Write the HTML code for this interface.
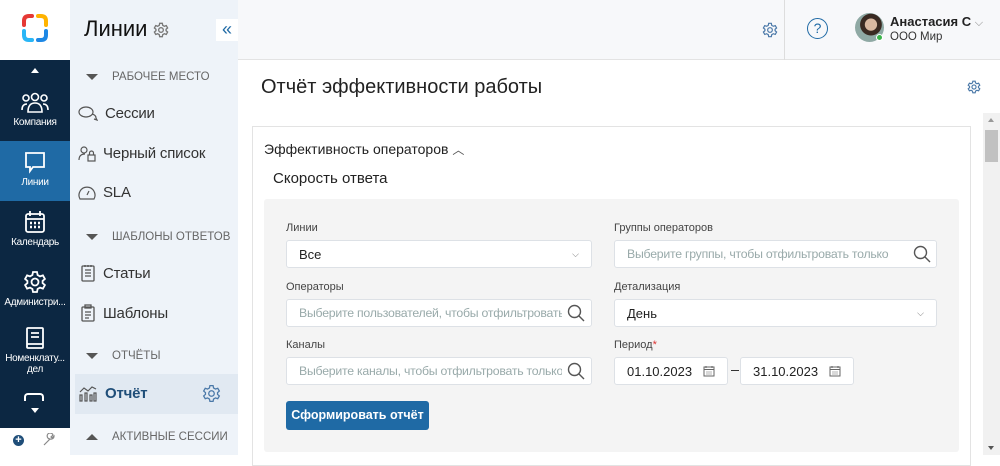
<!DOCTYPE html>
<html><head><meta charset="utf-8"><style>
*{box-sizing:border-box;margin:0;padding:0}
body{width:1000px;height:455px;overflow:hidden;font-family:"Liberation Sans",sans-serif;background:#fff;position:relative;color:#222}
.abs{position:absolute}
.nav{left:0;top:60px;width:70px;height:368px;background:#0c2742}
.navi{position:absolute;left:0;width:70px;text-align:center;color:#fff;font-size:10px;letter-spacing:-0.3px}
.navi svg{display:block;margin:0 auto 3px}
.side{left:70px;top:0;width:168px;height:455px;background:#eef3f9}
.si{position:absolute;left:8px;font-size:15px;color:#333;display:flex;align-items:center;letter-spacing:-0.2px}
.si svg{margin-right:7px}
.sh{position:absolute;left:16px;font-size:11.5px;color:#666;display:flex;align-items:center}
.sh i{width:0;height:0;border-left:6px solid transparent;border-right:6px solid transparent;border-top:6px solid #555;margin-right:14px}
.lbl{position:absolute;font-size:11px;color:#444}
.inp{position:absolute;background:#fff;border:1px solid #dde1e6;border-radius:3px;height:28px;font-size:13px;display:flex;align-items:center;padding-left:12px;white-space:nowrap;overflow:hidden}
.ph{color:#9aa;font-size:12.3px;letter-spacing:-0.25px}
</style></head><body>
<div class="abs" style="left:0;top:0;width:70px;height:60px;background:#fff"></div>
<svg class="abs" style="left:21px;top:13px" width="28" height="30" viewBox="0 0 28 30">
<path d="M3 12 V8 Q3 3 8 3 H11" stroke="#e53935" stroke-width="4" fill="none" stroke-linecap="round"/>
<path d="M17 3 H20 Q25 3 25 8 V12" stroke="#ffb300" stroke-width="4" fill="none" stroke-linecap="round"/>
<path d="M25 18 V22 Q25 27 20 27 H17" stroke="#1e88e5" stroke-width="4" fill="none" stroke-linecap="round"/>
<path d="M11 27 H8 Q3 27 3 22 V18" stroke="#29b6f6" stroke-width="4" fill="none" stroke-linecap="round"/>
</svg>
<div class="abs nav"></div>
<div class="abs" style="left:0;top:141px;width:70px;height:60px;background:#1f6aa5"></div>
<div class="abs" style="left:31px;top:68px;border-left:4px solid transparent;border-right:4px solid transparent;border-bottom:5px solid #fff"></div>
<div class="navi" style="top:92px"><svg width="28" height="22" viewBox="0 0 28 22" fill="none" stroke="#fff" stroke-width="1.6"><circle cx="14" cy="5" r="3.5"/><circle cx="5" cy="6" r="3"/><circle cx="23" cy="6" r="3"/><path d="M7 20 Q7 11 14 11 Q21 11 21 20Z"/><path d="M1 18 Q1 12 6 12"/><path d="M27 18 Q27 12 22 12"/></svg>Компания</div>
<div class="navi" style="top:150px"><svg width="24" height="24" viewBox="0 0 24 24" fill="none" stroke="#fff" stroke-width="1.8"><path d="M3 3H21V17H10L7 21V17H3Z"/></svg>Линии</div>
<div class="navi" style="top:210px"><svg width="22" height="24" viewBox="0 0 22 24" fill="none" stroke="#fff" stroke-width="1.8"><rect x="2" y="4" width="18" height="18" rx="2"/><path d="M6 1V6M16 1V6M2 9H20"/><path d="M6 13h2M10 13h2M14 13h2M6 17h2M10 17h2M14 17h2" stroke-width="2.5"/></svg>Календарь</div>
<div class="navi" style="top:270px"><svg width="24" height="24" viewBox="0 0 24 24" fill="none" stroke="#fff" stroke-width="1.8"><circle cx="12" cy="12" r="3.5"/><path d="M10 2h4l.6 3 2.4 1.4 2.9-1 2 3.5-2.3 2v2.2l2.3 2-2 3.5-2.9-1L14.6 19 14 22h-4l-.6-3L7 17.6l-2.9 1-2-3.5 2.3-2v-2.2l-2.3-2 2-3.5 2.9 1L9.4 5z"/></svg>Администри...</div>
<div class="navi" style="top:326px;line-height:11px"><svg width="22" height="24" viewBox="0 0 22 24" fill="none" stroke="#fff" stroke-width="1.8"><rect x="3" y="2" width="16" height="20" rx="1"/><path d="M7 7h8M7 11h8M3 18h16"/></svg>Номенклату...<br>дел</div>
<div class="abs" style="left:24px;top:393px;width:20px;height:8px;border:2px solid #fff;border-bottom:none;border-radius:4px 4px 0 0"></div>
<div class="abs" style="left:31px;top:408px;border-left:4px solid transparent;border-right:4px solid transparent;border-top:5px solid #fff"></div>
<div class="abs" style="left:13px;top:435px;width:11px;height:11px;border-radius:50%;background:#1f4e79;color:#fff;font-size:11px;line-height:10px;text-align:center;font-weight:bold">+</div>
<svg class="abs" style="left:42px;top:433px" width="14" height="14" viewBox="0 0 14 14" fill="none" stroke="#888" stroke-width="1.2"><path d="M2 12L8 6M8 6a3 3 0 1 1 3-4l-2 2 1 1 2-2a3 3 0 0 1-4 3"/></svg>
<div class="abs side"></div>
<div class="abs" style="left:84px;top:16px;font-size:22px;color:#111">Линии</div>
<svg class="abs" style="left:153px;top:22px" width="16" height="16" viewBox="0 0 24 24" fill="none" stroke="#777" stroke-width="2"><circle cx="12" cy="12" r="3.5"/><path d="M10 2h4l.6 3 2.4 1.4 2.9-1 2 3.5-2.3 2v2.2l2.3 2-2 3.5-2.9-1L14.6 19 14 22h-4l-.6-3L7 17.6l-2.9 1-2-3.5 2.3-2v-2.2l-2.3-2 2-3.5 2.9 1L9.4 5z"/></svg>
<div class="abs" style="left:216px;top:19px;width:22px;height:22px;background:#fff;color:#1f6aa5;font-size:18px;text-align:center;line-height:20px">«</div>
<div class="sh" style="top:71px;left:86px"><i></i>РАБОЧЕЕ МЕСТО</div>
<div class="si" style="top:105px;left:78px"><svg width="20" height="16" viewBox="0 0 20 16" fill="none" stroke="#555" stroke-width="1.2"><ellipse cx="8" cy="6" rx="7" ry="5"/><path d="M14 8q4 1 4 4l1 2-3-1"/></svg>Сессии</div>
<div class="si" style="top:145px;left:78px"><svg width="18" height="16" viewBox="0 0 18 16" fill="none" stroke="#555" stroke-width="1.2"><circle cx="6" cy="4" r="3"/><path d="M1 14q0-6 6-6"/><rect x="10" y="9" width="7" height="6"/><path d="M11.5 9V7a2 2 0 0 1 4 0v2"/></svg>Черный список</div>
<div class="si" style="top:184px;left:78px"><svg width="18" height="16" viewBox="0 0 18 16" fill="none" stroke="#555" stroke-width="1.2"><path d="M2 14a8 8 0 1 1 14 0Z"/><path d="M9 10l2-4"/></svg>SLA</div>
<div class="sh" style="top:231px;left:86px"><i></i>ШАБЛОНЫ ОТВЕТОВ</div>
<div class="si" style="top:264px;left:80px"><svg width="16" height="18" viewBox="0 0 16 18" fill="none" stroke="#555" stroke-width="1.3"><rect x="2" y="2" width="12" height="15" rx="1"/><path d="M5 6h6M5 9h6M5 12h6M5 1v2M8 1v2M11 1v2"/></svg>Статьи</div>
<div class="si" style="top:304px;left:80px"><svg width="16" height="18" viewBox="0 0 16 18" fill="none" stroke="#555" stroke-width="1.3"><rect x="2" y="3" width="12" height="14" rx="1"/><rect x="5" y="1" width="6" height="3"/><path d="M5 8h6M5 11h6M5 14h4"/></svg>Шаблоны</div>
<div class="sh" style="top:350px;left:86px"><i></i>ОТЧЁТЫ</div>
<div class="abs" style="left:75px;top:374px;width:163px;height:40px;background:#e1e9f2"></div>
<div class="si" style="top:384px;left:78px;font-weight:bold;color:#1f4e79"><svg width="20" height="18" viewBox="0 0 20 18" fill="none" stroke="#555" stroke-width="1.2"><path d="M2 8l4-4 4 3 4-4 4 2"/><rect x="2" y="11" width="2" height="6"/><rect x="7" y="9" width="2" height="8"/><rect x="12" y="11" width="2" height="6"/><rect x="16" y="9" width="2" height="8"/></svg>Отчёт</div>
<svg class="abs" style="left:202px;top:384px" width="19" height="19" viewBox="0 0 24 24" fill="none" stroke="#4a78a8" stroke-width="1.6"><circle cx="12" cy="12" r="3.5"/><path d="M10 2h4l.6 3 2.4 1.4 2.9-1 2 3.5-2.3 2v2.2l2.3 2-2 3.5-2.9-1L14.6 19 14 22h-4l-.6-3L7 17.6l-2.9 1-2-3.5 2.3-2v-2.2l-2.3-2 2-3.5 2.9 1L9.4 5z"/></svg>
<div class="sh" style="top:431px;left:86px"><i style="border-top:none;border-bottom:6px solid #555"></i>АКТИВНЫЕ СЕССИИ</div>
<div class="abs" style="left:238px;top:0;width:762px;height:60px;background:#f7f8fa;border-bottom:1px solid #e3e3e3"></div>
<div class="abs" style="left:784px;top:0;width:1px;height:60px;background:#ddd"></div>
<svg class="abs" style="left:762px;top:22px" width="16" height="16" viewBox="0 0 24 24" fill="none" stroke="#4a78a8" stroke-width="1.8"><circle cx="12" cy="12" r="3.5"/><path d="M10 2h4l.6 3 2.4 1.4 2.9-1 2 3.5-2.3 2v2.2l2.3 2-2 3.5-2.9-1L14.6 19 14 22h-4l-.6-3L7 17.6l-2.9 1-2-3.5 2.3-2v-2.2l-2.3-2 2-3.5 2.9 1L9.4 5z"/></svg>
<div class="abs" style="left:807px;top:18px;width:21px;height:21px;border:1.6px solid #1f6aa5;border-radius:50%;color:#1f6aa5;font-size:14px;text-align:center;line-height:18px">?</div>
<div class="abs" style="left:855px;top:13px;width:29px;height:29px;border-radius:50%;background:radial-gradient(circle at 55% 40%,#d9b8a0 0 25%,#3a2a22 27% 45%,#8fa9a4 47%)"></div>
<div class="abs" style="left:876px;top:34px;width:7px;height:7px;border-radius:50%;background:#3ab54a;border:1px solid #fff"></div>
<div class="abs" style="left:890px;top:14px;font-size:13px;font-weight:bold;color:#222">Анастасия С <span style="font-weight:normal;color:#888;font-size:11px">⌵</span></div>
<div class="abs" style="left:890px;top:31px;font-size:11.5px;color:#333">ООО Мир</div>
<div class="abs" style="left:261px;top:76px;font-size:20px;color:#222">Отчёт эффективности работы</div>
<svg class="abs" style="left:967px;top:80px" width="14" height="14" viewBox="0 0 24 24" fill="none" stroke="#4a78a8" stroke-width="2"><circle cx="12" cy="12" r="3.5"/><path d="M10 2h4l.6 3 2.4 1.4 2.9-1 2 3.5-2.3 2v2.2l2.3 2-2 3.5-2.9-1L14.6 19 14 22h-4l-.6-3L7 17.6l-2.9 1-2-3.5 2.3-2v-2.2l-2.3-2 2-3.5 2.9 1L9.4 5z"/></svg>
<div class="abs" style="left:983px;top:113px;width:17px;height:342px;background:#f1f1f1"></div>
<div class="abs" style="left:985px;top:130px;width:13px;height:32px;background:#c1c1c1"></div>
<div class="abs" style="left:988px;top:118px;border-left:3.5px solid transparent;border-right:3.5px solid transparent;border-bottom:4px solid #999"></div>
<div class="abs" style="left:988px;top:446px;border-left:3.5px solid transparent;border-right:3.5px solid transparent;border-top:4px solid #555"></div>
<div class="abs" style="left:252px;top:126px;width:719px;height:340px;border:1px solid #e3e3e3"></div>
<div class="abs" style="left:264px;top:141px;font-size:14px;color:#222">Эффективность операторов <span style="color:#555;font-size:12px">︿</span></div>
<div class="abs" style="left:273px;top:170px;font-size:15px;color:#222">Скорость ответа</div>
<div class="abs" style="left:264px;top:199px;width:695px;height:253px;background:#f4f4f4;border-radius:3px"></div>
<div class="lbl" style="left:286px;top:222px">Линии</div>
<div class="inp" style="left:286px;top:240px;width:306px">Все<span style="position:absolute;right:12px;color:#777;font-size:9px">⌵</span></div>
<div class="lbl" style="left:286px;top:281px">Операторы</div>
<div class="inp ph" style="left:286px;top:299px;width:306px">Выберите пользователей, чтобы отфильтровать</div>
<div class="lbl" style="left:286px;top:339px">Каналы</div>
<div class="inp ph" style="left:286px;top:357px;width:306px">Выберите каналы, чтобы отфильтровать только</div>
<div class="abs" style="left:286px;top:401px;width:143px;height:29px;background:#1f6aa5;border-radius:3px;color:#fff;font-size:12.5px;font-weight:bold;text-align:center;line-height:29px">Сформировать отчёт</div>
<div class="lbl" style="left:614px;top:222px">Группы операторов</div>
<div class="inp ph" style="left:614px;top:240px;width:323px">Выберите группы, чтобы отфильтровать только</div>
<div class="lbl" style="left:614px;top:281px">Детализация</div>
<div class="inp" style="left:614px;top:299px;width:323px">День<span style="position:absolute;right:12px;color:#777;font-size:9px">⌵</span></div>
<div class="lbl" style="left:614px;top:339px">Период<span style="color:#d33">*</span></div>
<div class="inp" style="left:614px;top:357px;width:114px">01.10.2023</div>
<div class="abs" style="left:731px;top:370px;width:8px;height:1px;background:#333"></div>
<div class="inp" style="left:740px;top:357px;width:114px">31.10.2023</div>
<svg class="abs" style="left:703px;top:365px" width="12" height="12" viewBox="0 0 12 12" fill="none" stroke="#666" stroke-width="1"><rect x="1" y="2" width="10" height="9"/><path d="M3 1v2M9 1v2M1 4.5h10M3.5 7h1M5.5 7h1M7.5 7h1M3.5 9h1M5.5 9h1M7.5 9h1"/></svg>
<svg class="abs" style="left:829px;top:365px" width="12" height="12" viewBox="0 0 12 12" fill="none" stroke="#666" stroke-width="1"><rect x="1" y="2" width="10" height="9"/><path d="M3 1v2M9 1v2M1 4.5h10M3.5 7h1M5.5 7h1M7.5 7h1M3.5 9h1M5.5 9h1M7.5 9h1"/></svg>
<div class="abs" style="left:562px;top:301px;width:29px;height:24px;background:#fff"></div>
<div class="abs" style="left:562px;top:359px;width:29px;height:24px;background:#fff"></div>
<div class="abs" style="left:908px;top:242px;width:28px;height:24px;background:#fff"></div>
<svg class="abs" style="left:567px;top:304px" width="18" height="18" viewBox="0 0 18 18" fill="none" stroke="#555" stroke-width="1.4"><circle cx="7.5" cy="7.5" r="6"/><path d="M12 12l5 5"/></svg>
<svg class="abs" style="left:567px;top:362px" width="18" height="18" viewBox="0 0 18 18" fill="none" stroke="#555" stroke-width="1.4"><circle cx="7.5" cy="7.5" r="6"/><path d="M12 12l5 5"/></svg>
<svg class="abs" style="left:913px;top:245px" width="18" height="18" viewBox="0 0 18 18" fill="none" stroke="#555" stroke-width="1.4"><circle cx="7.5" cy="7.5" r="6"/><path d="M12 12l5 5"/></svg>
</body></html>
